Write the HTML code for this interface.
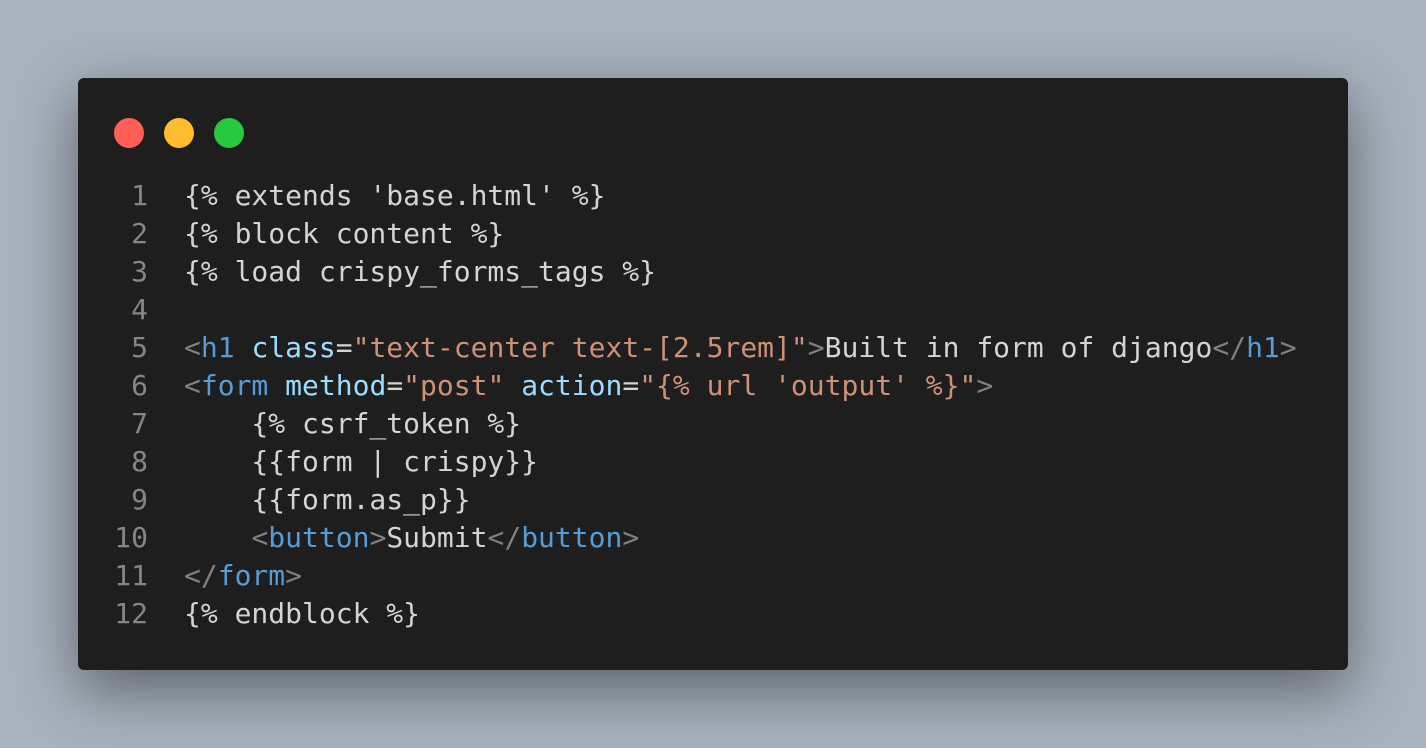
<!DOCTYPE html>
<html><head><style>
html,body{margin:0;padding:0}
body{width:1426px;height:748px;background:#a7b2bd;position:relative;overflow:hidden;font-family:"DejaVu Sans Mono","Liberation Mono",monospace}
.win{position:absolute;left:78px;top:78px;width:1270px;height:592px;background:#1e1e1e;border-radius:6px;box-shadow:0 20px 60px rgba(0,0,0,0.45)}
.dot{position:absolute;top:40px;width:30px;height:30px;border-radius:50%}
.code{position:absolute;left:0;top:99px;font-size:28px;line-height:38px;color:#d4d4d4;white-space:pre}
.ln{display:inline-block;width:70px;text-align:right;color:#858585;margin-right:36px}
.p{color:#808080}.t{color:#569cd6}.a{color:#9cdcfe}.s{color:#ce9178}
</style></head><body>
<div class="win">
<div class="dot" style="left:36px;background:#ff5f57"></div>
<div class="dot" style="left:86px;background:#febc2e"></div>
<div class="dot" style="left:136px;background:#28c840"></div>
<div class="code"><div><span class="ln">1</span>{% extends 'base.html' %}</div><div><span class="ln">2</span>{% block content %}</div><div><span class="ln">3</span>{% load crispy_forms_tags %}</div><div><span class="ln">4</span></div><div><span class="ln">5</span><span class="p">&lt;</span><span class="t">h1</span> <span class="a">class</span>=<span class="s">"text-center text-[2.5rem]"</span><span class="p">&gt;</span>Built in form of django<span class="p">&lt;/</span><span class="t">h1</span><span class="p">&gt;</span></div><div><span class="ln">6</span><span class="p">&lt;</span><span class="t">form</span> <span class="a">method</span>=<span class="s">"post"</span> <span class="a">action</span>=<span class="s">"{% url 'output' %}"</span><span class="p">&gt;</span></div><div><span class="ln">7</span>    {% csrf_token %}</div><div><span class="ln">8</span>    {{form | crispy}}</div><div><span class="ln">9</span>    {{form.as_p}}</div><div><span class="ln">10</span>    <span class="p">&lt;</span><span class="t">button</span><span class="p">&gt;</span>Submit<span class="p">&lt;/</span><span class="t">button</span><span class="p">&gt;</span></div><div><span class="ln">11</span><span class="p">&lt;/</span><span class="t">form</span><span class="p">&gt;</span></div><div><span class="ln">12</span>{% endblock %}</div></div>
</div>
</body></html>
